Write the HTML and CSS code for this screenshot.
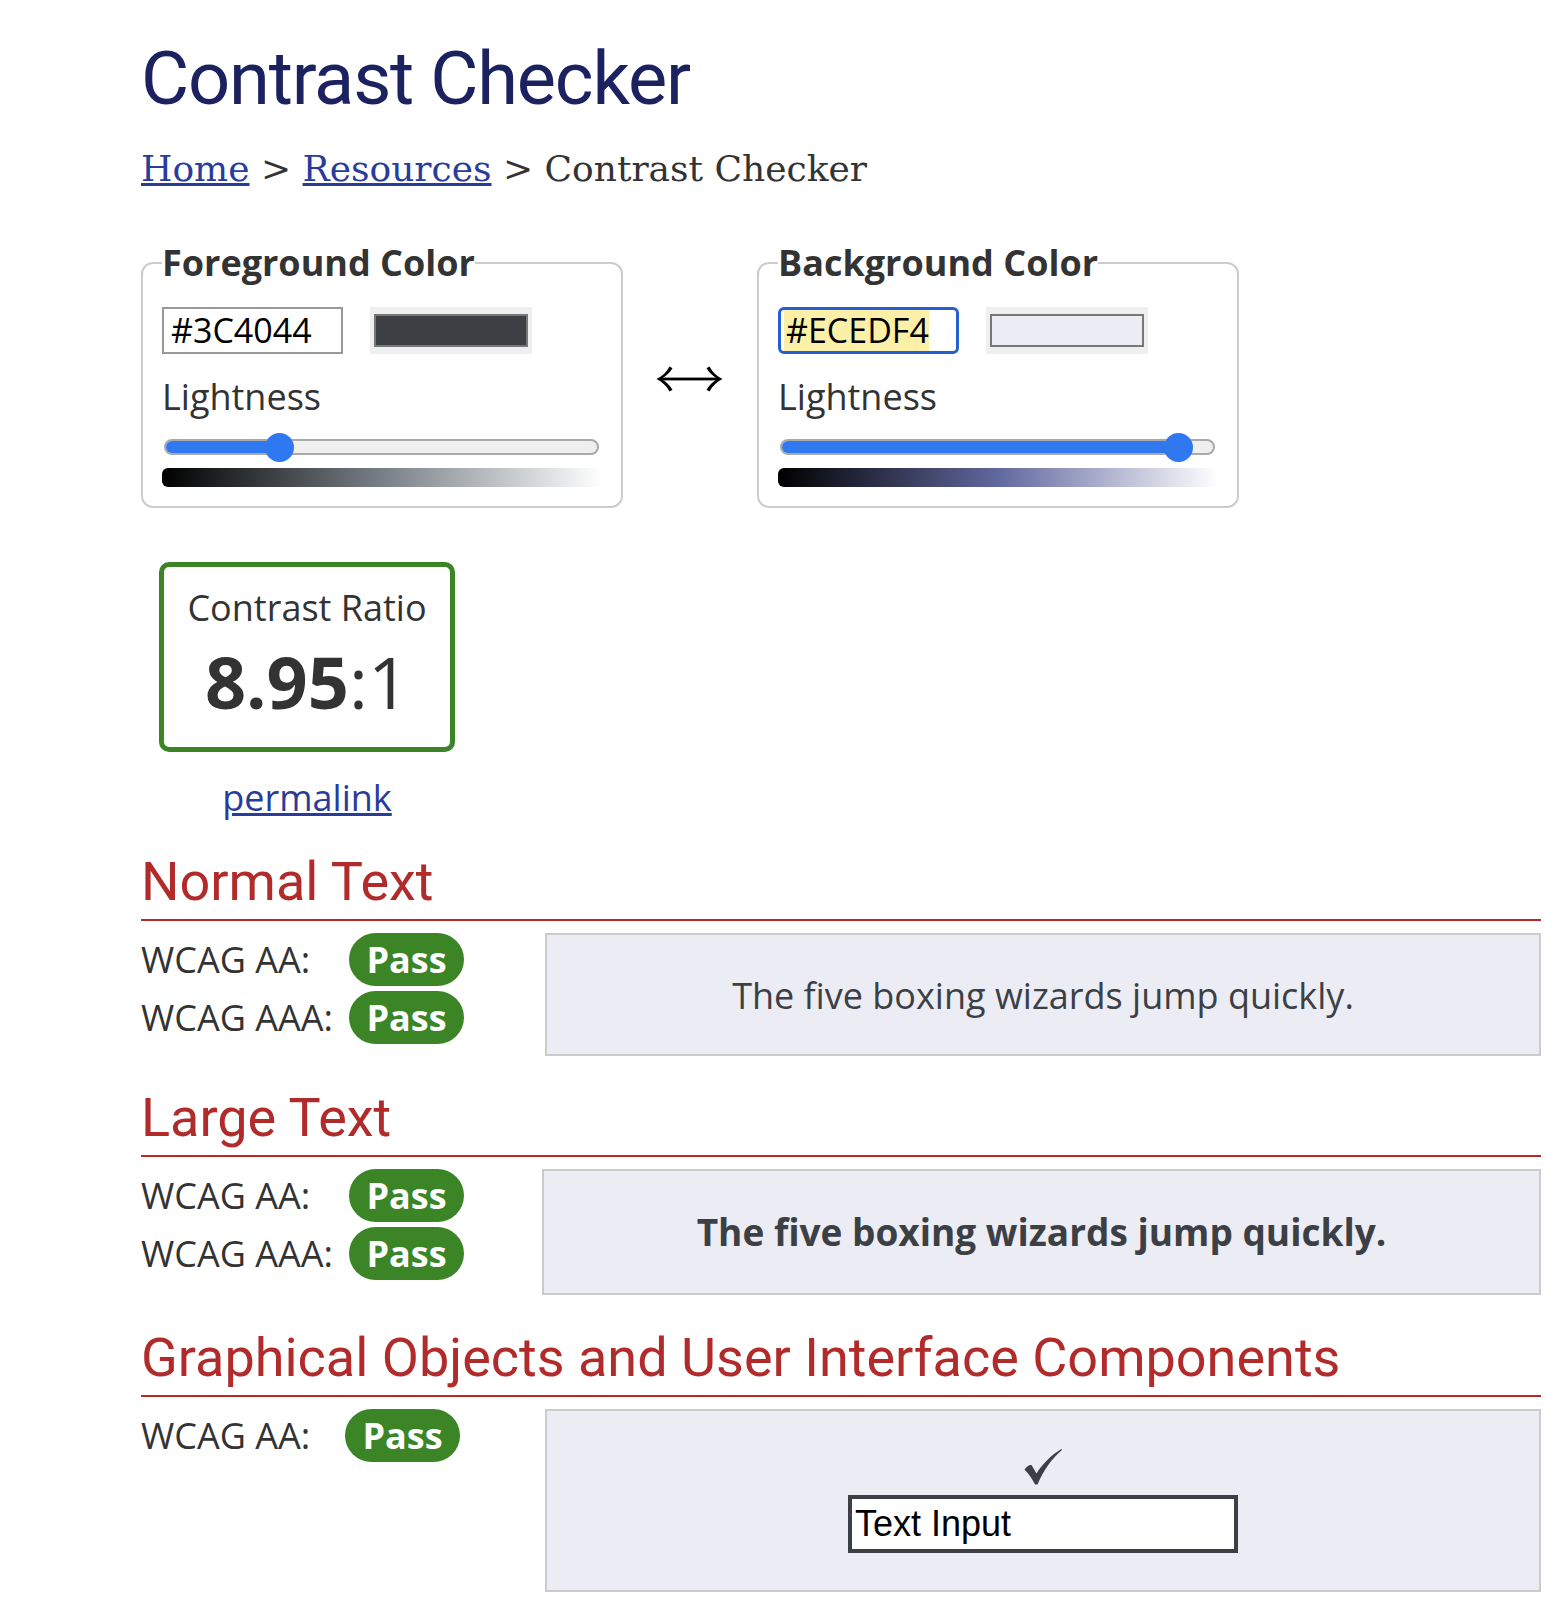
FILE: index.html
```html
<!DOCTYPE html>
<html lang="en">
<head>
<meta charset="utf-8">
<title>Contrast Checker</title>
<link rel="stylesheet" href="styles.css">
</head>
<body>
<main class="page">
  <h1 class="title">Contrast Checker</h1>
  <nav class="crumbs"><a href="#">Home</a> &gt; <a href="#">Resources</a> &gt; Contrast Checker</nav>

  <div class="pickers">
    <fieldset class="picker">
      <legend>Foreground Color</legend>
      <div class="pick-row">
        <span class="hex">#3C4044</span>
        <span class="swatch"><span class="swatch-fill fg-fill"></span></span>
      </div>
      <div class="light-label">Lightness</div>
      <div class="slider">
        <div class="track"><div class="track-fill" style="width:116px"></div></div>
        <div class="thumb" style="left:103px"></div>
      </div>
      <div class="grad fg-grad"></div>
    </fieldset>

    <svg class="swap" width="67" height="26" viewBox="0 0 67 26" aria-label="swap colors">
      <rect x="4" y="11.6" width="59" height="2.8" fill="#000"/>
      <path d="M0.5,13 C6,10.5 10.5,6 13.5,0.5 L16.5,2.3 C13.5,7 9.5,11 5,13 C9.5,15 13.5,19 16.5,23.7 L13.5,25.5 C10.5,20 6,15.5 0.5,13 Z" fill="#000"/>
      <path d="M66.5,13 C61,10.5 56.5,6 53.5,0.5 L50.5,2.3 C53.5,7 57.5,11 62,13 C57.5,15 53.5,19 50.5,23.7 L53.5,25.5 C56.5,20 61,15.5 66.5,13 Z" fill="#000"/>
    </svg>

    <fieldset class="picker">
      <legend>Background Color</legend>
      <div class="pick-row">
        <span class="hex hex-focus"><span class="sel">#ECEDF4</span></span>
        <span class="swatch"><span class="swatch-fill bg-fill"></span></span>
      </div>
      <div class="light-label">Lightness</div>
      <div class="slider">
        <div class="track"><div class="track-fill" style="width:399px"></div></div>
        <div class="thumb" style="left:386px"></div>
      </div>
      <div class="grad bg-grad"></div>
    </fieldset>
  </div>

  <div class="ratio-wrap">
    <div class="ratio-box">
      <div class="ratio-label">Contrast Ratio</div>
      <div class="ratio-value"><b>8.95</b>:1</div>
    </div>
    <a class="permalink" href="#">permalink</a>
  </div>

  <section class="result result-first">
    <h2>Normal Text</h2>
    <div class="result-body">
      <div class="checks">
        <div class="check"><span class="lbl">WCAG AA:</span><span class="pass">Pass</span></div>
        <div class="check"><span class="lbl">WCAG AAA:</span><span class="pass">Pass</span></div>
      </div>
      <div class="sample sample-normal">The five boxing wizards jump quickly.</div>
    </div>
  </section>

  <section class="result">
    <h2>Large Text</h2>
    <div class="result-body">
      <div class="checks checks-large">
        <div class="check"><span class="lbl">WCAG AA:</span><span class="pass">Pass</span></div>
        <div class="check"><span class="lbl">WCAG AAA:</span><span class="pass">Pass</span></div>
      </div>
      <div class="sample sample-large">The five boxing wizards jump quickly.</div>
    </div>
  </section>

  <section class="result result-ui">
    <h2>Graphical Objects and User Interface Components</h2>
    <div class="result-body">
      <div class="checks">
        <div class="check"><span class="lbl lbl-narrow">WCAG AA:</span><span class="pass">Pass</span></div>
      </div>
      <div class="sample sample-ui">
        <svg class="tick" width="38" height="36" viewBox="0 0 38 36" aria-hidden="true">
          <path d="M0.5,20.5 C2.5,17.5 5.5,15.5 7.5,16 L12.5,24.5 C18,15.5 27,6 37.5,0 L38,1 C28,9.5 19.5,21 13.5,35.5 L11,35.5 C8,29.5 4.5,24.5 0.5,20.5 Z" fill="#3c4044"/>
        </svg>
        <div class="fake-input">Text Input</div>
      </div>
    </div>
  </section>
</main>
</body>
</html>
```

FILE: styles.css
```css
html, body {
  margin: 0;
  padding: 0;
  background: #ffffff;
}

.page {
  width: 1400px;
  padding-left: 141px;
  font-family: "Open Sans", "Noto Sans", sans-serif;
  color: #333333;
}

.title {
  margin: 35px 0 0;
  font-family: Roboto, "Liberation Sans", sans-serif;
  font-weight: 400;
  font-size: 74px;
  letter-spacing: -1.2px;
  line-height: 88px;
  color: #1c2260;
}

.crumbs {
  margin-top: 25px;
  font-family: "DejaVu Serif", "Liberation Serif", serif;
  font-size: 36px;
  line-height: 41px;
  color: #333333;
}

.crumbs a {
  color: #283c9c;
}

.pickers {
  display: flex;
  align-items: center;
  margin-top: 49px;
}

.picker {
  box-sizing: border-box;
  width: 482px;
  margin: 0;
  padding: 20px 19px 19px;
  border: 2px solid #cccccc;
  border-radius: 12px;
  min-width: 0;
}

.picker legend {
  padding: 0;
  font-weight: 700;
  font-size: 36px;
  line-height: 49px;
  color: #333333;
}

.pick-row {
  display: flex;
  gap: 27px;
  height: 47px;
}

.hex {
  box-sizing: border-box;
  width: 181px;
  height: 47px;
  border: 2px solid #999999;
  padding-left: 7px;
  font-size: 34px;
  line-height: 43px;
  color: #000000;
  background: #ffffff;
}

.hex-focus {
  display: flex;
  align-items: stretch;
  border: 3px solid #2460d2;
  border-radius: 6px;
  padding: 0 0 0 3px;
}

.sel {
  background: #fcf0a8;
  padding-left: 2px;
  line-height: 41px;
}

.swatch {
  box-sizing: border-box;
  display: block;
  width: 162px;
  height: 47px;
  padding: 7px 4px;
  background: #efefef;
}

.swatch-fill {
  display: block;
  box-sizing: border-box;
  height: 33px;
  border: 2px solid #777777;
}

.fg-fill { background: #3c4044; }
.bg-fill { background: #ecedf4; }

.light-label {
  margin-top: 18px;
  font-size: 36px;
  line-height: 49px;
  color: #333333;
}

.slider {
  position: relative;
  height: 29px;
  margin-top: 12px;
}

.track {
  box-sizing: border-box;
  position: relative;
  top: 6px;
  height: 16px;
  margin: 0 3px 0 2px;
  border: 2px solid #aaaaaa;
  border-radius: 8px;
  background: #efefef;
  overflow: hidden;
}

.track-fill {
  height: 100%;
  margin: -2px 0 0 -2px;
  padding: 2px 0;
  background: #3078f0;
}

.thumb {
  position: absolute;
  top: 0;
  width: 29px;
  height: 29px;
  border-radius: 50%;
  background: #3078f0;
}

.grad {
  height: 19px;
  margin-top: 6px;
  border-radius: 6px;
}

.fg-grad {
  background: linear-gradient(to right, #000000, hsl(210, 6%, 50%), #ffffff);
}

.bg-grad {
  background: linear-gradient(to right, #000000, hsl(233, 24%, 50%), #ffffff);
}

.swap {
  flex: none;
  margin: 12px 34px 0 33px;
}

.ratio-wrap {
  display: flex;
  flex-direction: column;
  align-items: center;
  width: 296px;
  margin: 54px 0 0 18px;
}

.ratio-box {
  box-sizing: border-box;
  width: 296px;
  padding: 16px 0 17px;
  border: 5px solid #3b8527;
  border-radius: 10px;
  text-align: center;
}

.ratio-label {
  font-size: 36px;
  line-height: 49px;
  color: #333333;
}

.ratio-value {
  font-size: 72px;
  line-height: 98px;
  color: #333333;
}

.ratio-value b {
  font-weight: 700;
}

.permalink {
  margin-top: 21px;
  font-size: 36px;
  line-height: 49px;
  color: #283c9c;
}

.result h2 {
  margin: 29px 0 0;
  padding-bottom: 4px;
  border-bottom: 2px solid #b22b2b;
  font-family: Roboto, "Liberation Sans", sans-serif;
  font-weight: 400;
  font-size: 54px;
  line-height: 66px;
  color: #b22b2b;
}

.result-first h2 {
  margin-top: 27px;
}

.result-ui h2 {
  margin-top: 30px;
}

.result-body {
  display: flex;
  align-items: flex-start;
  margin-top: 12px;
}

.checks {
  flex: none;
  width: 404px;
  display: flex;
  flex-direction: column;
  gap: 5px;
}

.checks-large {
  width: 401px;
}

.check {
  display: flex;
  align-items: center;
  height: 53px;
}

.lbl {
  width: 208px;
  font-size: 36px;
  line-height: 49px;
  color: #333333;
}

.lbl-narrow {
  width: 204px;
}

.pass {
  width: 115px;
  height: 53px;
  border-radius: 27px;
  background: #3b8527;
  color: #ffffff;
  font-weight: 700;
  font-size: 36px;
  line-height: 53px;
  text-align: center;
}

.sample {
  flex: 1;
  box-sizing: border-box;
  border: 2px solid #cccccc;
  background: #ecedf4;
  color: #3c4044;
  text-align: center;
}

.sample-normal {
  padding: 36px 10px 34px;
  font-size: 36px;
  line-height: 49px;
}

.sample-large {
  padding: 35px 10px;
  font-size: 37px;
  font-weight: 700;
  line-height: 52px;
}

.sample-ui {
  display: flex;
  flex-direction: column;
  align-items: center;
  padding: 38px 0 37px;
}

.tick {
  display: block;
  flex: none;
}

.fake-input {
  box-sizing: border-box;
  flex: none;
  width: 390px;
  height: 58px;
  margin-top: 10px;
  padding-left: 3px;
  border: 4px solid #3c4044;
  background: #ffffff;
  font-family: "Liberation Sans", Arial, sans-serif;
  font-size: 36px;
  line-height: 50px;
  color: #000000;
  text-align: left;
}
```
